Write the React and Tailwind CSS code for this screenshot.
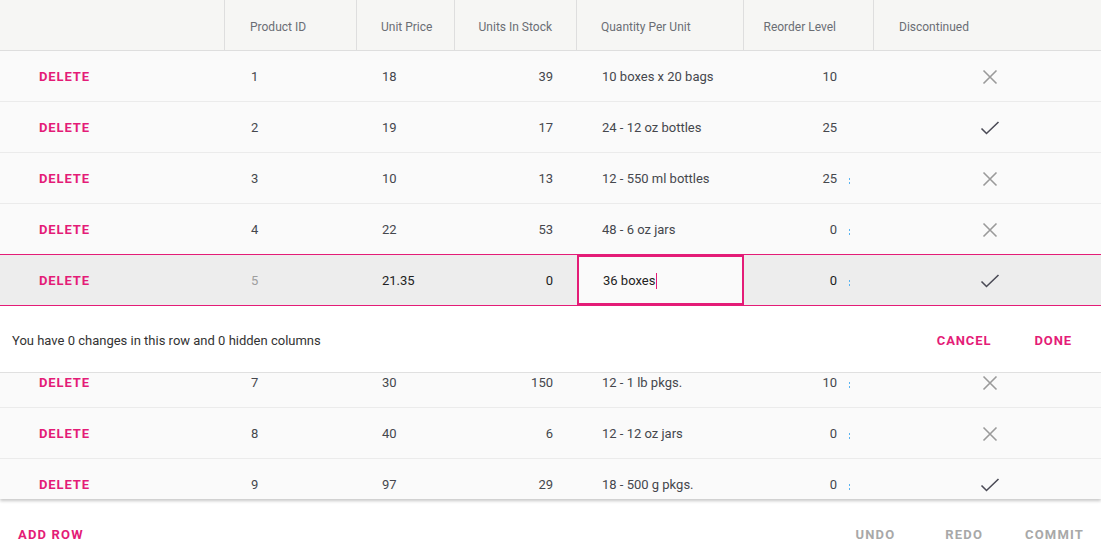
import React from 'react';

const rows = [
  { id: 1, price: '18', stock: 39, qty: '10 boxes x 20 bags', reorder: 10, disc: false, tick: false },
  { id: 2, price: '19', stock: 17, qty: '24 - 12 oz bottles', reorder: 25, disc: true, tick: false },
  { id: 3, price: '10', stock: 13, qty: '12 - 550 ml bottles', reorder: 25, disc: false, tick: true },
  { id: 4, price: '22', stock: 53, qty: '48 - 6 oz jars', reorder: 0, disc: false, tick: true },
  { id: 5, price: '21.35', stock: 0, qty: '36 boxes', reorder: 0, disc: true, tick: true, editing: true },
  { id: 6, hidden: true },
  { id: 7, price: '30', stock: 150, qty: '12 - 1 lb pkgs.', reorder: 10, disc: false, tick: true },
  { id: 8, price: '40', stock: 6, qty: '12 - 12 oz jars', reorder: 0, disc: false, tick: true },
  { id: 9, price: '97', stock: 29, qty: '18 - 500 g pkgs.', reorder: 0, disc: true, tick: true },
];

function XIcon() {
  return (
    <svg width="16" height="16" viewBox="0 0 16 16" className="text-[#9a9a9a]">
      <path d="M1.5 1.5 L14.5 14.5 M14.5 1.5 L1.5 14.5" stroke="currentColor" strokeWidth="1.6" fill="none" />
    </svg>
  );
}

function CheckIcon() {
  return (
    <svg width="20" height="14" viewBox="0 0 20 14" className="text-[#4a4a55]">
      <path d="M1.5 7.5 L6.5 12.5 L18.5 1" stroke="currentColor" strokeWidth="1.6" fill="none" />
    </svg>
  );
}

function Tick() {
  return (
    <span className="absolute left-[105px] top-[23px] flex flex-col gap-[2px]">
      <span className="block h-[2px] w-[1px] bg-[#5ab4f0]" />
      <span className="block h-[2px] w-[1px] bg-[#5ab4f0]" />
    </span>
  );
}

function Row({ r }) {
  // row 6 sits under the editing banner, nothing of it shows
  if (r.hidden) return <div className="h-[51px] border-b border-[#ebebeb] bg-[#fafafa]" />;
  const ed = r.editing;
  const tone = ed ? 'text-[#222]' : 'text-[#45474d]';
  return (
    <div
      className={
        'flex pt-[2px] text-[13px] ' +
        (ed
          ? 'bg-[#ededed] border-y border-[#e41c77] h-[52px] -mt-px'
          : 'h-[51px] bg-[#fafafa] border-b border-[#ebebeb]')
      }
    >
      <div className="flex w-[225px] shrink-0 items-center pl-[39px]">
        <span className="text-[13px] font-bold tracking-[0.07em] text-[#e41c77]">DELETE</span>
      </div>
      <div className={'flex w-[132px] shrink-0 items-center pl-[26px] ' + (ed ? 'text-[#9e9e9e]' : 'text-[#45474d]')}>
        {r.id}
      </div>
      <div className={'flex w-[98px] shrink-0 items-center pl-[25px] ' + tone}>{r.price}</div>
      <div className={'flex w-[122px] shrink-0 items-center justify-end pr-[24px] ' + tone}>{r.stock}</div>
      {ed ? (
        <div className="-mt-[2px] flex w-[167px] shrink-0 items-center border-2 border-[#e41c77] bg-[#fafafa] pl-[24px] pt-[2px] text-[#222]">
          {r.qty}
          <span className="ml-px inline-block h-[16px] w-px bg-[#e41c77]" />
        </div>
      ) : (
        <div className="flex w-[167px] shrink-0 items-center pl-[25px] text-[#45474d]">{r.qty}</div>
      )}
      <div className={'relative flex w-[130px] shrink-0 items-center justify-end pr-[37px] ' + tone}>
        {r.reorder}
        {r.tick && <Tick />}
      </div>
      <div className="flex flex-1 items-center justify-center pl-[5px]">
        {r.disc ? <CheckIcon /> : <XIcon />}
      </div>
    </div>
  );
}

export default function App() {
  return (
    <div className="h-[556px] w-[1101px] overflow-hidden bg-white" style={{ fontFamily: 'Roboto, "Noto Sans", sans-serif' }}>
      <div className="relative shadow-[0_2px_3px_rgba(0,0,0,0.22)]">
        {/* header */}
        <div className="flex h-[51px] border-b border-[#dedede] bg-[#f6f6f4] pt-[3px] text-[12px] text-[#6b6e74]">
          <div className="w-[225px] shrink-0 border-r border-[#dedede] -mt-[3px]" />
          <div className="flex w-[132px] shrink-0 items-center border-r border-[#dedede] pl-[25px] -mt-[3px] pt-[3px]">Product ID</div>
          <div className="flex w-[98px] shrink-0 items-center border-r border-[#dedede] pl-[24px] -mt-[3px] pt-[3px]">Unit Price</div>
          <div className="flex w-[122px] shrink-0 items-center justify-end border-r border-[#dedede] pr-[24px] -mt-[3px] pt-[3px]">Units In Stock</div>
          <div className="flex w-[167px] shrink-0 items-center border-r border-[#dedede] pl-[24px] -mt-[3px] pt-[3px]">Quantity Per Unit</div>
          <div className="flex w-[130px] shrink-0 items-center justify-end border-r border-[#dedede] pr-[37px] -mt-[3px] pt-[3px]">Reorder Level</div>
          <div className="flex flex-1 items-center pl-[25px]">Discontinued</div>
        </div>

        {/* body */}
        <div className="relative h-[448px] overflow-hidden bg-[#fafafa]">
          {rows.map((r) => (
            <Row key={r.id} r={r} />
          ))}

          {/* row editing overlay */}
          <div className="absolute left-0 right-0 top-[255px] flex h-[67px] items-center justify-between border-b border-[#e0e0e0] bg-white pl-[12px] pr-[29px] pt-[3px]">
            <span className="text-[13px] text-[#333]">You have 0 changes in this row and 0 hidden columns</span>
            <div className="flex gap-[43px] text-[13px] font-bold tracking-[0.07em] text-[#e41c77]">
              <span>CANCEL</span>
              <span>DONE</span>
            </div>
          </div>
        </div>
      </div>

      {/* footer */}
      <div className="flex h-[56px] items-center justify-between pl-[18px] pr-[17px] pt-[16px] text-[13px] font-bold tracking-[0.09em]">
        <span className="text-[#e41c77]">ADD ROW</span>
        <div className="flex text-[#a8a8a8]">
          <span>UNDO</span>
          <span className="ml-[50px]">REDO</span>
          <span className="ml-[42px]">COMMIT</span>
        </div>
      </div>
    </div>
  );
}
